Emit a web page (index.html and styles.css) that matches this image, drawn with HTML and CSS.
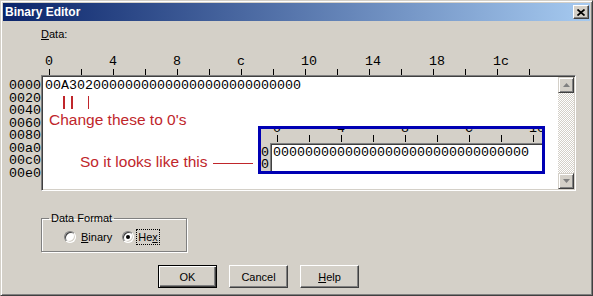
FILE: index.html
```html
<!DOCTYPE html>
<html>
<head>
<meta charset="utf-8">
<title>Binary Editor</title>
<link rel="stylesheet" href="styles.css">
</head>
<body>
<div class="window">
  <div class="titlebar">
    <span class="title">Binary Editor</span>
    <span class="close"><svg width="8" height="7" viewBox="0 0 8 7"><path d="M0.5 0.5L7.5 6.5M7.5 0.5L0.5 6.5" stroke="#000" stroke-width="1.7" fill="none"/></svg></span>
  </div>
  <div class="content">
    <div class="data-label"><u>D</u>ata:</div>
    <div class="ruler">
      <div class="ruler-labels"><span>0</span><span>4</span><span>8</span><span>c</span><span>10</span><span>14</span><span>18</span><span>1c</span></div>
      <div class="ruler-ticks"></div>
    </div>
    <div class="edit-row">
      <div class="addresses">
        <div>0000</div><div>0020</div><div>0040</div><div>0060</div><div>0080</div><div>00a0</div><div>00c0</div><div>00e0</div>
      </div>
      <div class="editbox">
        <div class="hex">
          <div class="hex-line">00A30200000000000000000000000000</div>
          <span class="mark mark-a"></span>
          <span class="mark mark-b"></span>
          <span class="mark mark-c"></span>
          <div class="note note-change">Change these to 0's</div>
          <div class="note note-looks">So it looks like this</div>
          <span class="pointer-line"></span>
          <div class="inset">
            <div class="inset-ruler">
              <div class="inset-labels"><span>0</span><span>4</span><span>8</span><span>C</span><span>10</span></div>
              <div class="inset-ticks"></div>
            </div>
            <div class="inset-body">
              <div class="inset-addr"><div>0</div><div>0</div></div>
              <div class="inset-edit">00000000000000000000000000000000</div>
            </div>
          </div>
        </div>
        <div class="scrollbar">
          <div class="sb-btn"><svg width="7" height="4" viewBox="0 0 7 4"><path d="M3.5 0L7 4H0Z" fill="#808080"/></svg></div>
          <div class="sb-track"></div>
          <div class="sb-btn"><svg width="7" height="4" viewBox="0 0 7 4"><path d="M0 0H7L3.5 4Z" fill="#808080"/></svg></div>
        </div>
      </div>
    </div>
    <fieldset class="format">
      <legend>Data Format</legend>
      <div class="radios">
        <span class="radio"><span class="radio-circle"></span><span class="radio-text"><u>B</u>inary</span></span>
        <span class="radio radio-hex"><span class="radio-circle checked"></span><span class="radio-text focus">He<u>x</u></span></span>
      </div>
    </fieldset>
    <div class="buttons">
      <button class="btn btn-default">OK</button>
      <button class="btn">Cancel</button>
      <button class="btn"><u>H</u>elp</button>
    </div>
  </div>
</div>
</body>
</html>
```

FILE: styles.css
```css
* { box-sizing: border-box; }
html, body { margin: 0; padding: 0; }
body {
  width: 593px;
  height: 296px;
  overflow: hidden;
  background: #d4d0c8;
  font-family: "Liberation Sans", Arial, sans-serif;
  font-size: 11px;
  color: #000;
}
.window {
  width: 593px;
  height: 296px;
  background: #d4d0c8;
  border: 1px solid;
  border-color: #d4d0c8 #404040 #404040 #d4d0c8;
  box-shadow: inset 1px 1px #fff, inset -1px -1px #808080;
  padding: 2px;
}
.titlebar {
  height: 18px;
  display: flex;
  align-items: center;
  justify-content: space-between;
  padding: 0 1px 0 2px;
  background: linear-gradient(to right, #0a246a, #a6caf0);
}
.title {
  color: #fff;
  font-weight: bold;
  font-size: 12px;
}
.close {
  width: 16px;
  height: 14px;
  display: flex;
  align-items: center;
  justify-content: center;
  background: #d4d0c8;
  border: 1px solid;
  border-color: #fff #404040 #404040 #fff;
  box-shadow: inset -1px -1px #808080;
}
.content {
  padding-left: 6px;
}
.data-label {
  margin: 7px 0 0 32px;
  line-height: 13px;
}
.ruler {
  margin: 15px 0 0 36px;
  font-family: "Liberation Mono", "Courier New", monospace;
  font-size: 13.33px;
}
.ruler-labels {
  display: flex;
  height: 12px;
  line-height: 12px;
}
.ruler-labels span { width: 64px; flex-shrink: 0; }
.ruler-ticks {
  margin-top: 1px;
  width: 512px;
  height: 6px;
  background: repeating-linear-gradient(to right, transparent 0 4px, #000 4px 5px, transparent 5px 32px);
}
.edit-row {
  display: flex;
  font-family: "Liberation Mono", "Courier New", monospace;
  font-size: 13.33px;
}
.addresses {
  width: 32px;
  padding-top: 5px;
  line-height: 12.5px;
}
.editbox {
  width: 535px;
  height: 116px;
  display: flex;
  background: #fff;
  border: 1px solid;
  border-color: #808080 #fff #fff #808080;
  box-shadow: inset 1px 1px #404040, inset -1px -1px #d4d0c8;
  padding: 1px;
}
.hex {
  flex: 1;
  position: relative;
  padding: 3px 0 0 2px;
  line-height: 12.5px;
  white-space: nowrap;
}
.mark {
  position: absolute;
  top: 19px;
  width: 1.5px;
  height: 13px;
  background: #c0262b;
}
.mark-a { left: 20px; }
.mark-b { left: 28px; }
.mark-c { left: 44.5px; }
.note {
  position: absolute;
  font-family: "Liberation Sans", Arial, sans-serif;
  font-size: 15.5px;
  line-height: 18px;
  color: #c0262b;
}
.note-change { left: 6px; top: 34px; }
.note-looks { left: 37px; top: 76px; }
.pointer-line {
  position: absolute;
  left: 170px;
  top: 86px;
  width: 40px;
  height: 1px;
  background: #c0262b;
}
.inset {
  position: absolute;
  left: 215px;
  top: 49px;
  width: 287px;
  height: 48px;
  border: 3px solid #0000b4;
  background: #d4d0c8;
  overflow: hidden;
}
.inset-ruler {
  display: flex;
  flex-direction: column;
  height: 14px;
  margin-left: 12px;
}
.inset-labels {
  display: flex;
  margin-top: -6px;
  height: 12px;
  line-height: 12px;
}
.inset-labels span { width: 64px; flex-shrink: 0; }
.inset-ticks {
  height: 7px;
  background: repeating-linear-gradient(to right, transparent 0 4px, #000 4px 5px, transparent 5px 32px);
}
.inset-body {
  display: flex;
  height: 28px;
}
.inset-addr {
  width: 9px;
  padding-top: 4px;
  line-height: 12px;
  overflow: hidden;
}
.inset-edit {
  flex: 1;
  background: #fff;
  border-top: 1px solid #808080;
  border-left: 1px solid #808080;
  box-shadow: inset 1px 1px #404040;
  padding: 3px 0 0 2px;
  line-height: 12px;
  white-space: nowrap;
}
.scrollbar {
  width: 16px;
  display: flex;
  flex-direction: column;
}
.sb-btn {
  height: 16px;
  display: flex;
  align-items: center;
  justify-content: center;
  background: #d4d0c8;
  border: 1px solid;
  border-color: #d4d0c8 #404040 #404040 #d4d0c8;
  box-shadow: inset 1px 1px #fff, inset -1px -1px #808080;
}
.sb-track {
  flex: 1;
  background: repeating-conic-gradient(#fff 0 25%, #d4d0c8 0 50%) 0 0 / 2px 2px;
}
.format {
  margin: 21px 0 0 32px;
  width: 146px;
  padding: 0 0 7px 0;
  border: 1px solid #808080;
  box-shadow: inset 1px 1px #fff, 1px 1px #fff;
}
.format legend {
  margin-left: 7px;
  padding: 0 2px;
  line-height: 13px;
}
.radios {
  display: flex;
  align-items: center;
  height: 14px;
  margin-top: 5px;
  padding-left: 22px;
}
.radio {
  display: flex;
  align-items: center;
}
.radio-hex { margin-left: 10px; }
.radio-circle {
  width: 12px;
  height: 12px;
  border-radius: 50%;
  background: #fff;
  border: 1px solid;
  border-color: #808080 #fff #fff #808080;
  box-shadow: inset 1px 1px #404040, inset -1px -1px #d4d0c8;
  display: flex;
  align-items: center;
  justify-content: center;
}
.radio-circle.checked::after {
  content: "";
  width: 4px;
  height: 4px;
  border-radius: 50%;
  background: #000;
}
.radio-text {
  margin-left: 5px;
  line-height: 14px;
}
.radio-text.focus {
  margin-left: 2px;
  border: 1px dotted #000;
  padding: 0 1px;
}
.buttons {
  display: flex;
  gap: 12px;
  margin: 13px 0 0 149px;
}
.btn {
  width: 59px;
  height: 23px;
  padding: 0;
  font-family: "Liberation Sans", Arial, sans-serif;
  font-size: 11px;
  color: #000;
  background: #d4d0c8;
  border: 1px solid;
  border-color: #fff #404040 #404040 #fff;
  box-shadow: inset -1px -1px #808080;
}
.btn-default {
  border: 1px solid #000;
  box-shadow: inset 1px 1px #fff, inset -1px -1px #404040, inset -2px -2px #808080;
}
```
